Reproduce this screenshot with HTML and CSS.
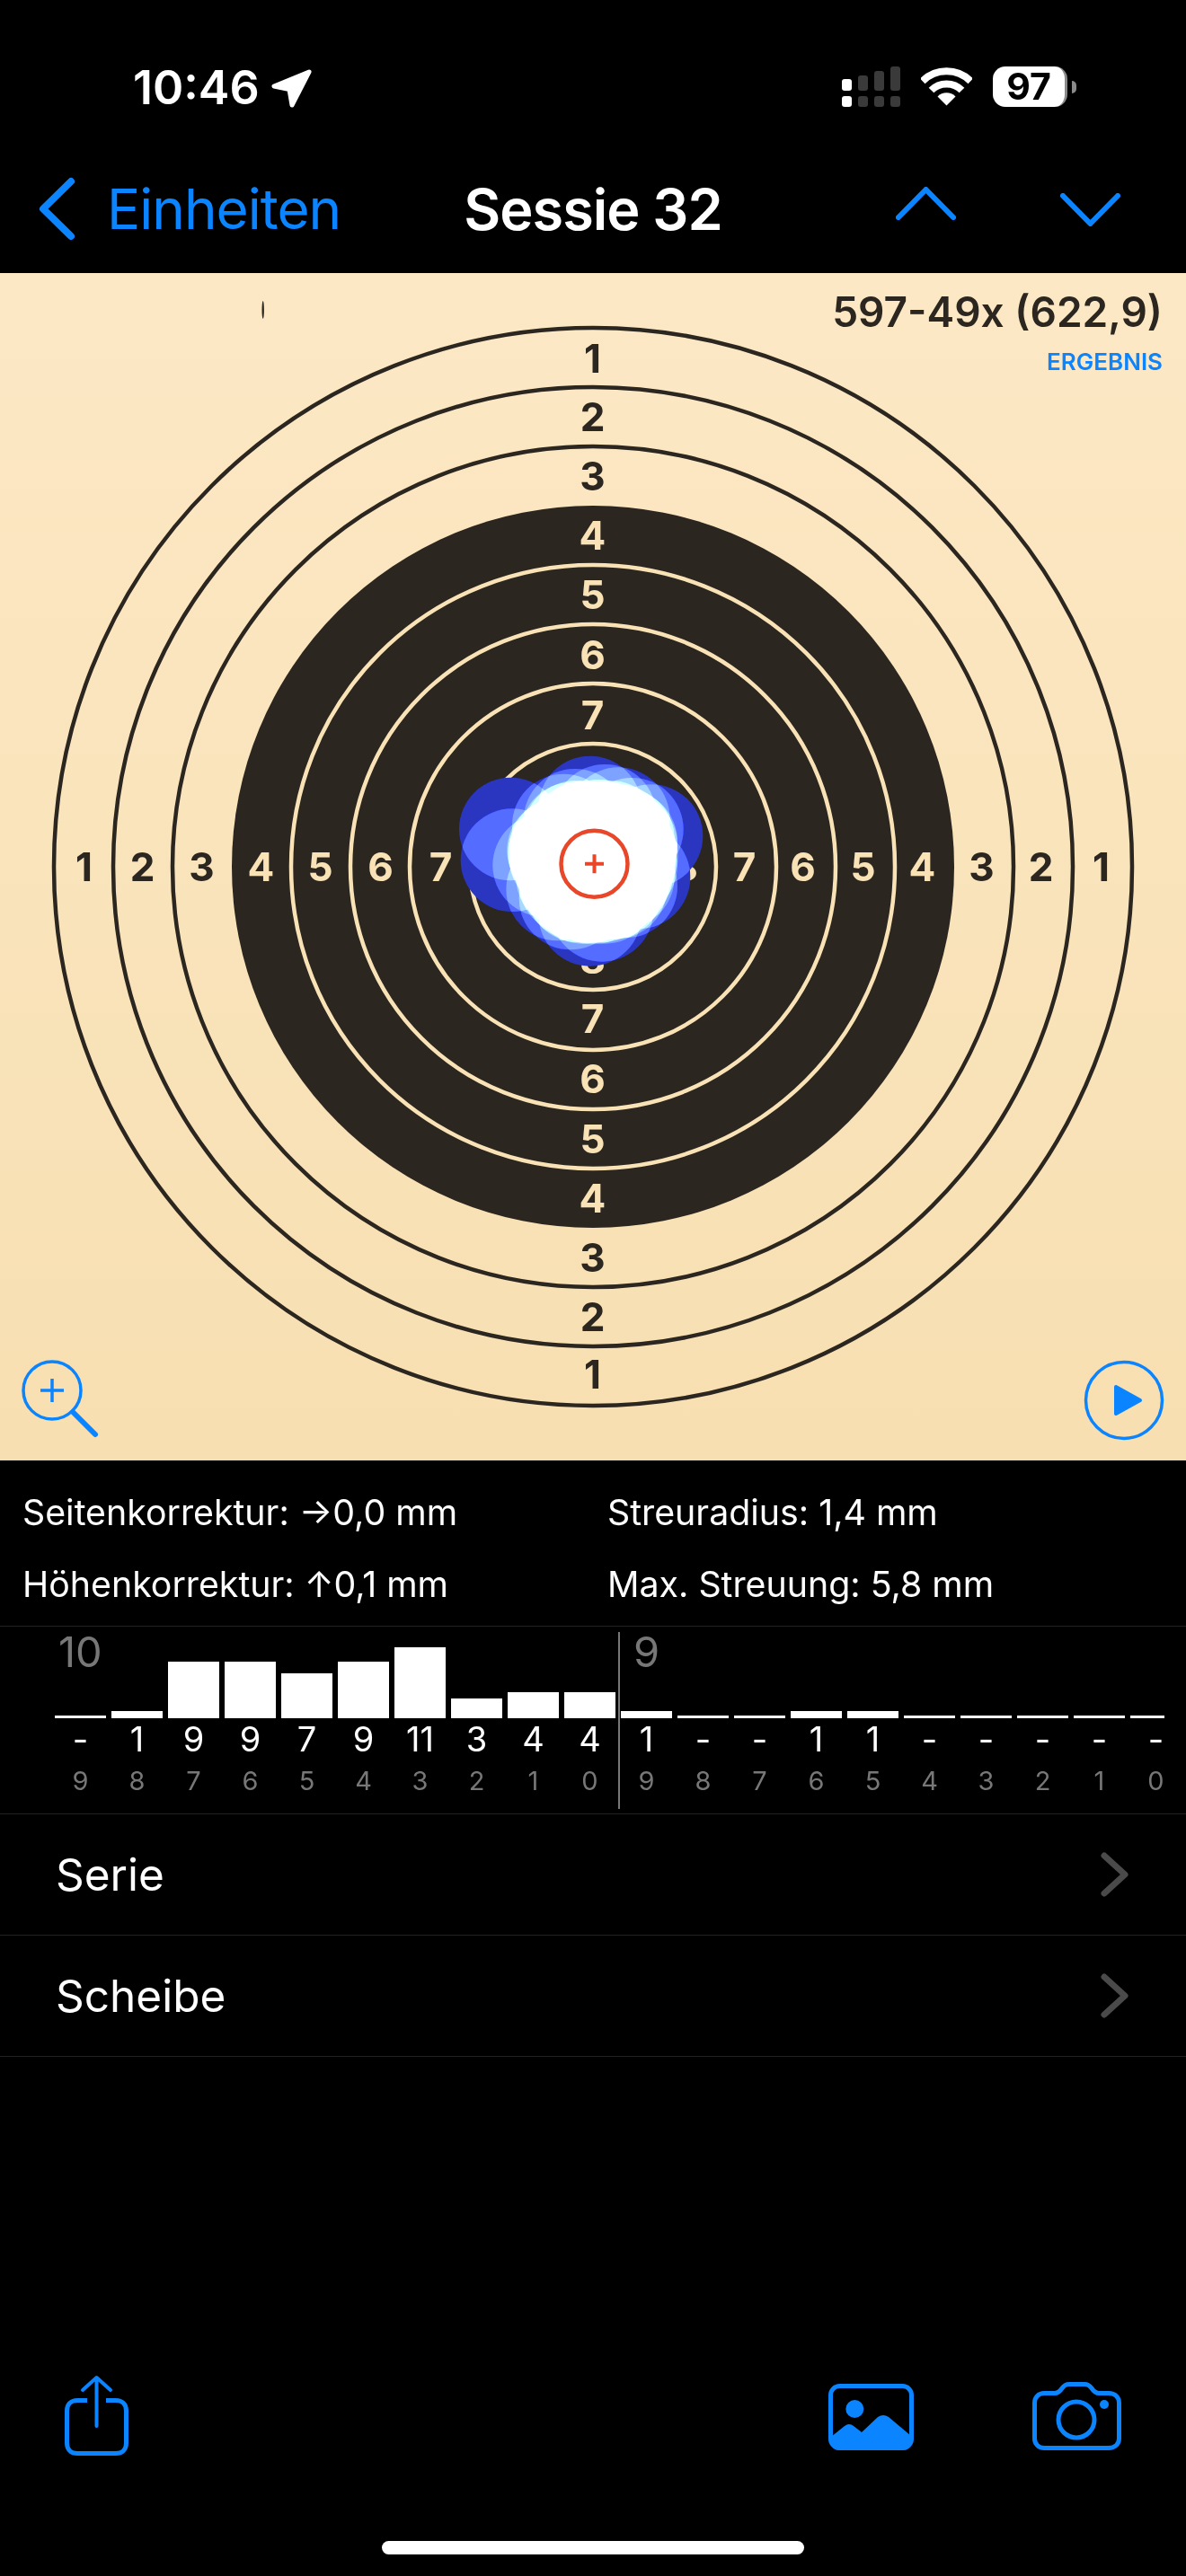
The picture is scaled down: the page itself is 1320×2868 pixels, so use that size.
FILE: index.html
```html
<!DOCTYPE html>
<html lang="de">
<head>
<meta charset="utf-8">
<title>Sessie 32</title>
<link rel="stylesheet" href="styles.css">
</head>
<body>
<div class="page">
  <header class="status">
    <div class="clock">
      <span class="time">10:46</span>
      <svg class="loc" viewBox="0 0 46 44"><path d="M42 4 L3 20 L20 23.5 L23 41 Z"/></svg>
    </div>
    <div class="indicators">
      <svg class="signal" viewBox="0 0 65 45">
        <rect class="on" x="0" y="14" width="11" height="13" rx="3"/>
        <rect class="off" x="18" y="10" width="11" height="17" rx="3"/>
        <rect class="off" x="36" y="5" width="11" height="22" rx="3"/>
        <rect class="off" x="54" y="0" width="11" height="27" rx="3"/>
        <rect class="on" x="0" y="33" width="11" height="12" rx="3"/>
        <rect class="off" x="18" y="33" width="11" height="12" rx="3"/>
        <rect class="off" x="36" y="33" width="11" height="12" rx="3"/>
        <rect class="off" x="54" y="33" width="11" height="12" rx="3"/>
      </svg>
      <svg class="wifi" viewBox="0 0 57 43">
        <path class="arc" d="M1.7 15.3 A38 38 0 0 1 55.3 15.3"/>
        <path class="arc" d="M11.5 25.5 A24 24 0 0 1 45.5 25.5"/>
        <path class="wedge" d="M18.5 32.5 A14 14 0 0 1 38.5 32.5 L28.5 42.5 Z"/>
      </svg>
      <div class="battery">97</div>
      <div class="nub"></div>
    </div>
  </header>

  <nav class="nav">
    <div class="nav-left">
      <svg class="back" viewBox="0 0 42 71"><path d="M37 5 L6 35.5 L37 66"/></svg>
      <span class="back-label">Einheiten</span>
    </div>
    <div class="title">Sessie 32</div>
    <div class="nav-right">
      <svg class="chev up" viewBox="0 0 67 37"><path d="M3 34 L33.5 3 L64 34"/></svg>
      <svg class="chev down" viewBox="0 0 67 37"><path d="M3 3 L33.5 34 L64 3"/></svg>
    </div>
  </nav>

  <section class="target">
    <svg class="board" viewBox="0 304 1320 1322" width="1320" height="1322">
      <ellipse class="tick" cx="292.7" cy="345" rx="1.2" ry="10"/>
      <circle class="ring-d" cx="660" cy="965" r="600"/>
      <circle class="ring-d" cx="660" cy="965" r="534"/>
      <circle class="ring-d" cx="660" cy="965" r="468"/>
      <circle class="disk" cx="660" cy="965" r="402"/>
      <circle class="ring-l" cx="660" cy="965" r="336"/>
      <circle class="ring-l" cx="660" cy="965" r="270"/>
      <circle class="ring-l" cx="660" cy="965" r="204"/>
      <circle class="ring-l" cx="660" cy="965" r="137"/>

      <g class="num num-d">
        <text x="659.5" y="415">1</text><text x="659.5" y="480">2</text><text x="659.5" y="546">3</text>
        <text x="659.5" y="1546">1</text><text x="659.5" y="1482">2</text><text x="659.5" y="1416">3</text>
        <text x="93.5" y="981">1</text><text x="158.5" y="981">2</text><text x="224.5" y="981">3</text>
        <text x="1225.5" y="981">1</text><text x="1158.5" y="981">2</text><text x="1092.5" y="981">3</text>
      </g>
      <g class="num num-l">
        <text x="659.5" y="612">4</text><text x="659.5" y="678">5</text><text x="659.5" y="745">6</text><text x="659.5" y="812">7</text><text x="659.5" y="878">8</text>
        <text x="659.5" y="1350">4</text><text x="659.5" y="1284">5</text><text x="659.5" y="1217">6</text><text x="659.5" y="1150">7</text><text x="659.5" y="1084">8</text>
        <text x="290.5" y="981">4</text><text x="356.5" y="981">5</text><text x="423.5" y="981">6</text><text x="490.5" y="981">7</text><text x="556.5" y="981">8</text>
        <text x="1026.5" y="981">4</text><text x="960.5" y="981">5</text><text x="893.5" y="981">6</text><text x="828.5" y="981">7</text><text x="762.5" y="981">8</text>
      </g>

      <g class="hits" transform="translate(440 780) scale(.33333)">
        <circle cx="385" cy="429" r="172"/><circle cx="390" cy="533" r="172"/><circle cx="650" cy="357" r="172"/><circle cx="855" cy="452" r="172"/>
        <circle cx="813" cy="590" r="172"/><circle cx="650" cy="715" r="172"/><circle cx="690" cy="700" r="172"/><circle cx="745" cy="395" r="172"/>
        <circle cx="562" cy="417" r="172"/><circle cx="497" cy="550" r="172"/><circle cx="542" cy="630" r="172"/><circle cx="585" cy="660" r="172"/>
        <circle cx="790" cy="430" r="172"/><circle cx="770" cy="620" r="172"/><circle cx="600" cy="400" r="172"/><circle cx="700" cy="385" r="172"/>
        <circle cx="620" cy="445" r="172"/><circle cx="660" cy="442" r="172"/><circle cx="700" cy="445" r="172"/><circle cx="740" cy="450" r="172"/><circle cx="770" cy="470" r="172"/>
        <circle cx="575" cy="480" r="172"/><circle cx="610" cy="485" r="172"/><circle cx="650" cy="480" r="172"/><circle cx="695" cy="482" r="172"/><circle cx="735" cy="490" r="172"/><circle cx="768" cy="505" r="172"/>
        <circle cx="555" cy="520" r="172"/><circle cx="600" cy="525" r="172"/><circle cx="640" cy="520" r="172"/><circle cx="680" cy="525" r="172"/><circle cx="725" cy="530" r="172"/><circle cx="765" cy="540" r="172"/>
        <circle cx="570" cy="560" r="172"/><circle cx="610" cy="565" r="172"/><circle cx="650" cy="560" r="172"/><circle cx="695" cy="565" r="172"/><circle cx="735" cy="570" r="172"/><circle cx="755" cy="580" r="172"/>
        <circle cx="590" cy="600" r="172"/><circle cx="630" cy="605" r="172"/><circle cx="670" cy="600" r="172"/><circle cx="710" cy="605" r="172"/><circle cx="745" cy="600" r="172"/>
        <circle cx="610" cy="635" r="172"/><circle cx="650" cy="638" r="172"/><circle cx="690" cy="635" r="172"/><circle cx="725" cy="625" r="172"/>
        <circle cx="552" cy="495" r="172"/><circle cx="548" cy="510" r="172"/><circle cx="552" cy="525" r="172"/><circle cx="545" cy="500" r="172"/>
        <circle cx="590" cy="445" r="172"/><circle cx="600" cy="440" r="172"/><circle cx="630" cy="440" r="172"/><circle cx="680" cy="436" r="172"/>
        <circle cx="720" cy="440" r="172"/><circle cx="760" cy="462" r="172"/><circle cx="770" cy="480" r="172"/><circle cx="772" cy="520" r="172"/>
        <circle cx="770" cy="550" r="172"/><circle cx="760" cy="590" r="172"/><circle cx="735" cy="625" r="172"/><circle cx="700" cy="640" r="172"/>
        <circle cx="660" cy="642" r="172"/><circle cx="625" cy="640" r="172"/><circle cx="600" cy="625" r="172"/><circle cx="585" cy="610" r="172"/>
        <circle cx="575" cy="590" r="172"/>
      </g>

      <circle class="center-ring" cx="661.5" cy="961.7" r="37"/>
      <path class="center-plus" d="M651 961.7 H672 M661.5 951.2 V972.2"/>

      <g class="tool">
        <circle cx="58" cy="1548" r="32"/>
        <path d="M58 1535 V1561 M45 1548 H71"/>
        <path class="handle" d="M81 1572 L106 1597"/>
        <circle cx="1251" cy="1559" r="42.5"/>
        <path class="play" d="M1242 1544 L1269 1559 L1242 1574 Z"/>
      </g>
    </svg>
    <div class="score">597-49x (622,9)</div>
    <div class="score-label">ERGEBNIS</div>
  </section>

  <section class="info">
    <div>Seitenkorrektur: →0,0 mm</div>
    <div>Streuradius: 1,4 mm</div>
    <div>Höhenkorrektur: ↑0,1 mm</div>
    <div>Max. Streuung: 5,8 mm</div>
  </section>

  <section class="hist">
    <div class="group">
      <span class="ring-no">10</span>
      <div class="col"><div class="plot"><div class="bar" style="height:3px"></div></div><div class="val">-</div><div class="lab">9</div></div>
      <div class="col"><div class="plot"><div class="bar" style="height:8px"></div></div><div class="val">1</div><div class="lab">8</div></div>
      <div class="col"><div class="plot"><div class="bar" style="height:63px"></div></div><div class="val">9</div><div class="lab">7</div></div>
      <div class="col"><div class="plot"><div class="bar" style="height:63px"></div></div><div class="val">9</div><div class="lab">6</div></div>
      <div class="col"><div class="plot"><div class="bar" style="height:50px"></div></div><div class="val">7</div><div class="lab">5</div></div>
      <div class="col"><div class="plot"><div class="bar" style="height:63px"></div></div><div class="val">9</div><div class="lab">4</div></div>
      <div class="col"><div class="plot"><div class="bar" style="height:79px"></div></div><div class="val">11</div><div class="lab">3</div></div>
      <div class="col"><div class="plot"><div class="bar" style="height:22px"></div></div><div class="val">3</div><div class="lab">2</div></div>
      <div class="col"><div class="plot"><div class="bar" style="height:29px"></div></div><div class="val">4</div><div class="lab">1</div></div>
      <div class="col"><div class="plot"><div class="bar" style="height:29px"></div></div><div class="val">4</div><div class="lab">0</div></div>
    </div>
    <div class="divider"></div>
    <div class="group">
      <span class="ring-no">9</span>
      <div class="col"><div class="plot"><div class="bar" style="height:8px"></div></div><div class="val">1</div><div class="lab">9</div></div>
      <div class="col"><div class="plot"><div class="bar" style="height:3px"></div></div><div class="val">-</div><div class="lab">8</div></div>
      <div class="col"><div class="plot"><div class="bar" style="height:3px"></div></div><div class="val">-</div><div class="lab">7</div></div>
      <div class="col"><div class="plot"><div class="bar" style="height:8px"></div></div><div class="val">1</div><div class="lab">6</div></div>
      <div class="col"><div class="plot"><div class="bar" style="height:8px"></div></div><div class="val">1</div><div class="lab">5</div></div>
      <div class="col"><div class="plot"><div class="bar" style="height:3px"></div></div><div class="val">-</div><div class="lab">4</div></div>
      <div class="col"><div class="plot"><div class="bar" style="height:3px"></div></div><div class="val">-</div><div class="lab">3</div></div>
      <div class="col"><div class="plot"><div class="bar" style="height:3px"></div></div><div class="val">-</div><div class="lab">2</div></div>
      <div class="col"><div class="plot"><div class="bar" style="height:3px"></div></div><div class="val">-</div><div class="lab">1</div></div>
      <div class="col"><div class="plot"><div class="bar bar-last" style="height:3px"></div></div><div class="val">-</div><div class="lab">0</div></div>
    </div>
  </section>

  <ul class="list">
    <li class="row"><span>Serie</span><svg class="disc" viewBox="0 0 31 50"><path d="M4 4 L27 25 L4 46"/></svg></li>
    <li class="row"><span>Scheibe</span><svg class="disc" viewBox="0 0 31 50"><path d="M4 4 L27 25 L4 46"/></svg></li>
  </ul>

  <footer class="toolbar">
    <svg class="t-share" viewBox="0 0 71 90">
      <path d="M25 28.5 H14 C7 28.5 2.5 33 2.5 40 V76 C2.5 83 7 87.5 14 87.5 H57 C64 87.5 68.5 83 68.5 76 V40 C68.5 33 64 28.5 57 28.5 H46"/>
      <path class="thin" d="M35.5 4 V57 M20 17 L35.5 3 L51 17"/>
    </svg>
    <span class="grow"></span>
    <svg class="t-photo" viewBox="0 0 95 74">
      <rect x="2.5" y="2.5" width="90" height="69" rx="10"/>
      <circle class="solid" cx="29.3" cy="28" r="10"/>
      <path class="solid" d="M3 59 L18 47 Q23 43 28 47 L37 54 L55 37 Q61 33 67 37 L92 58 V64 Q92 74 82 74 H13 Q3 74 3 64 Z"/>
    </svg>
    <svg class="t-camera" viewBox="0 0 99 76">
      <path d="M13 12.5 H25 C29 12.5 31 10 33 7 C35 4 37 2.5 41 2.5 H58 C62 2.5 64 4 66 7 C68 10 70 12.5 74 12.5 H85 C92 12.5 96.5 17 96.5 23 V63 C96.5 69 92 73.5 85 73.5 H13 C7 73.5 2.5 69 2.5 63 V23 C2.5 17 7 12.5 13 12.5 Z"/>
      <circle cx="49" cy="42" r="20"/>
      <circle class="solid" cx="80" cy="25" r="5"/>
    </svg>
  </footer>
  <div class="home"></div>
</div>
</body>
</html>
```

FILE: styles.css
```css
* { box-sizing: border-box; }
html, body { margin: 0; padding: 0; background: #000; }
body { font-family: Inter, "Liberation Sans", sans-serif; color: #fff; }
.page { width: 1320px; height: 2868px; display: flex; flex-direction: column; overflow: hidden; }

/* status bar */
.status { height: 165px; flex: none; display: flex; justify-content: space-between; align-items: flex-start; padding: 70px 122px 0 148px; }
.clock { display: flex; align-items: center; }
.time { font-size: 52px; line-height: 56px; font-weight: 600; }
.loc { width: 46px; height: 44px; margin-left: 13px; }
.loc path { fill: #fff; stroke: #fff; stroke-width: 5; stroke-linejoin: round; }
.indicators { display: flex; align-items: center; padding-top: 4px; }
.signal { width: 65px; height: 45px; }
.signal .on { fill: #fff; }
.signal .off { fill: #3a3a3a; }
.wifi { width: 57px; height: 43px; margin-left: 23px; }
.wifi .arc { fill: none; stroke: #fff; stroke-width: 8; }
.wifi .wedge { fill: #fff; }
.battery { width: 83px; height: 45px; margin-left: 23px; background: #fff; border-radius: 14px; border-right: 3px solid #8a8a8a; color: #000; font-size: 41px; line-height: 45px; font-weight: 700; text-align: center; }
.nub { width: 5px; height: 14px; margin-left: 5px; background: #8a8a8a; border-radius: 0 5px 5px 0; }

/* navigation */
.nav { height: 139px; flex: none; display: grid; grid-template-columns: 1fr auto 1fr; align-items: center; padding: 0 42px 4px; }
.nav-left { display: flex; align-items: center; }
.back { width: 42px; height: 71px; }
.back path { fill: none; stroke: #0a84ff; stroke-width: 8; stroke-linecap: round; stroke-linejoin: round; }
.back-label { margin-left: 35px; font-size: 62px; line-height: 70px; color: #0a84ff; letter-spacing: -1px; }
.title { font-size: 63px; line-height: 70px; font-weight: 600; letter-spacing: -1px; }
.nav-right { display: flex; justify-content: flex-end; gap: 116px; padding-right: 31px; }
.chev { width: 67px; height: 37px; }
.chev path { fill: none; stroke: #0a84ff; stroke-width: 6; stroke-linecap: round; stroke-linejoin: round; }
.chev.up { margin-top: -6px; }
.chev.down { margin-top: 1px; }

/* target */
.target { position: relative; height: 1322px; flex: none; background: linear-gradient(#fce8c5, #f7dfb1); }
.board { display: block; }
.tick { fill: #2b261f; }
.ring-d { fill: none; stroke: #2b261f; stroke-width: 4.5; }
.disk { fill: #2b261f; }
.ring-l { fill: none; stroke: #f8e2b6; stroke-width: 4.5; }
.num text { font-family: Inter, "Liberation Sans", sans-serif; font-size: 44px; font-weight: 700; text-anchor: middle; }
.num-d text { fill: #2b261f; }
.num-l text { fill: #f8e2b6; }
.hits { isolation: isolate; }
.hits circle { fill: rgb(42, 54, 192); mix-blend-mode: plus-lighter; }
.center-ring { fill: none; stroke: #e8472a; stroke-width: 4.5; }
.center-plus { fill: none; stroke: #e8472a; stroke-width: 4; }
.tool circle, .tool path { fill: none; stroke: #0a84ff; stroke-width: 3.5; }
.tool .handle { stroke-width: 6; stroke-linecap: round; }
.tool .play { fill: #0a84ff; stroke-width: 4; stroke-linejoin: round; }
.score { position: absolute; top: 18px; right: 26px; color: #2b261f; font-size: 46px; line-height: 50px; font-weight: 600; white-space: nowrap; }
.score-label { position: absolute; top: 84px; right: 26px; color: #0a84ff; font-size: 26px; line-height: 30px; font-weight: 600; white-space: nowrap; }

/* info */
.info { height: 184px; flex: none; display: grid; grid-template-columns: 651px 1fr; grid-auto-rows: 80px; padding: 18px 0 6px 25px; font-size: 39.3px; line-height: 80px; white-space: nowrap; }

/* histogram */
.hist { height: 210px; flex: none; display: flex; align-items: flex-start; padding: 6px 0 0 61px; border-top: 1px solid #222; border-bottom: 1px solid #222; }
.group { position: relative; display: flex; gap: 6px; }
.ring-no { position: absolute; top: -6px; left: 4px; color: #777; font-size: 47px; line-height: 56px; }
.group + .divider + .group .ring-no { left: 14px; }
.col { width: 57px; text-align: center; }
.plot { height: 96px; display: flex; align-items: flex-end; }
.bar { width: 100%; background: #fff; }
.bar-last { width: 38px; }
.val { height: 46px; font-size: 38px; line-height: 46px; white-space: nowrap; }
.lab { height: 47px; font-size: 29px; line-height: 47px; color: #777; }
.divider { width: 2px; height: 197px; margin: 0 1px 0 3px; background: #777; }

/* list */
.list { list-style: none; margin: 0; padding: 0; flex: none; }
.row { height: 135px; display: flex; justify-content: space-between; align-items: center; padding: 0 64px 0 62px; border-bottom: 1px solid #222; font-size: 49.5px; }
.disc { width: 31px; height: 50px; }
.disc path { fill: none; stroke: #4a4a4a; stroke-width: 7; stroke-linecap: round; stroke-linejoin: round; }

/* toolbar */
.toolbar { margin-top: auto; height: 185px; flex: none; display: flex; align-items: flex-start; padding: 0 72px; }
.toolbar svg path, .toolbar svg rect, .toolbar svg circle { fill: none; stroke: #0a84ff; stroke-width: 5; stroke-linejoin: round; }
.toolbar svg .thin { stroke-width: 4; stroke-linecap: round; }
.toolbar svg .solid { fill: #0a84ff; stroke: none; }
.t-share { width: 71px; height: 90px; }
.grow { flex: 1; }
.t-photo { width: 95px; height: 74px; margin: 10px 132px 0 0; }
.t-camera { width: 99px; height: 76px; margin-top: 8px; }
.home { width: 470px; height: 15px; flex: none; margin: 0 auto 24px; background: #fff; border-radius: 8px; }
```
